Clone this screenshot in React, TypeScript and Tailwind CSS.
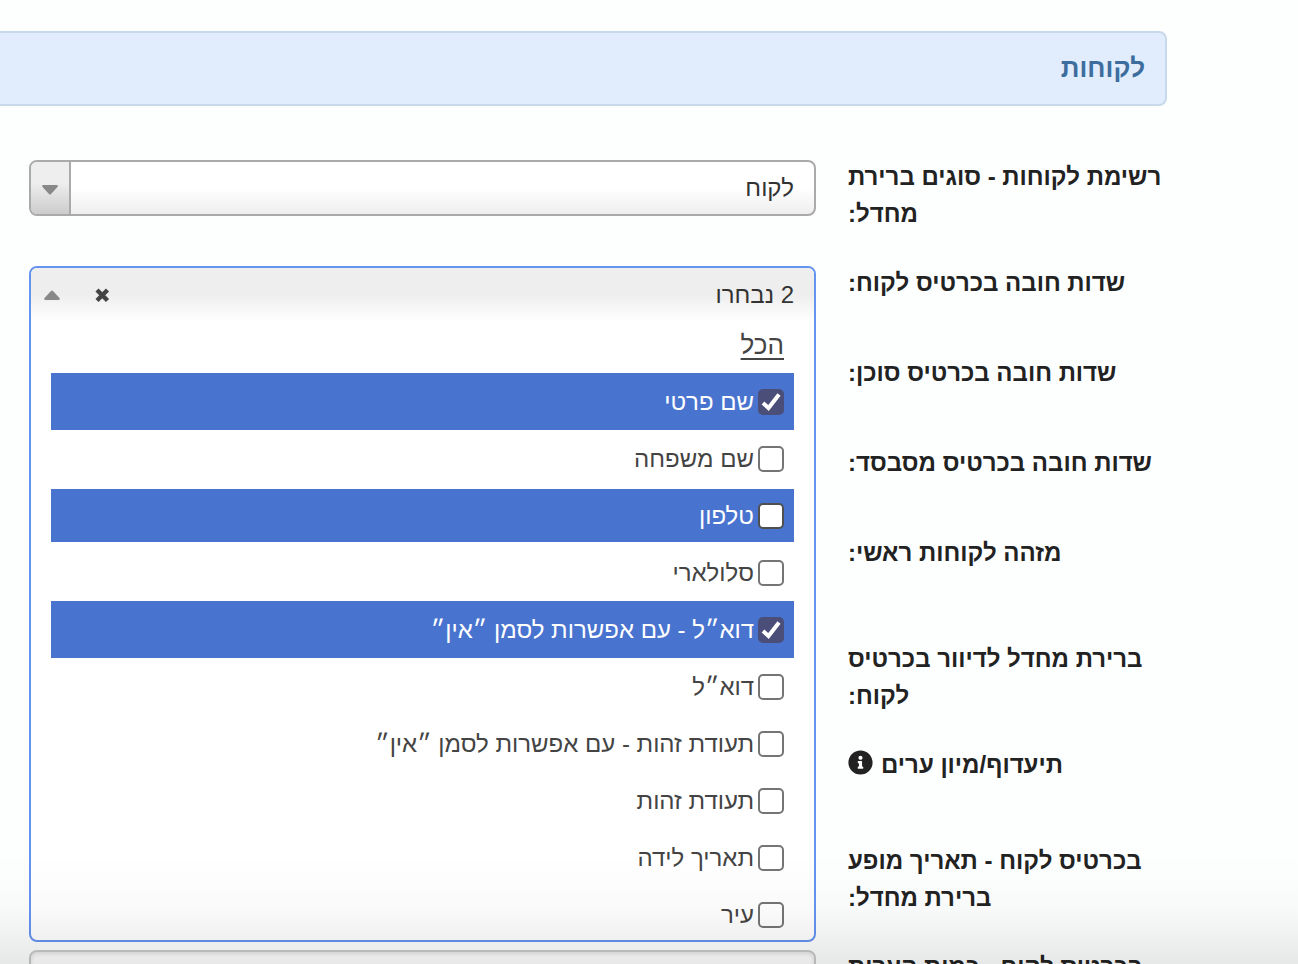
import { useState } from "react";
import { FaInfoCircle } from "react-icons/fa";

type Field = { id: string; label: string; size: string; info?: boolean };

const FIELDS: Field[] = [
  { id: "list-type", label: "רשימת לקוחות - סוגים ברירת מחדל:", size: "min-h-[74px]" },
  { id: "client-required", label: "שדות חובה בכרטיס לקוח:", size: "min-h-[58px]" },
  { id: "agent-required", label: "שדות חובה בכרטיס סוכן:", size: "min-h-[58px]" },
  { id: "sponsor-required", label: "שדות חובה בכרטיס מסבסד:", size: "min-h-[58px]" },
  { id: "main-id", label: "מזהה לקוחות ראשי:", size: "min-h-[74px]" },
  { id: "mailing", label: "ברירת מחדל לדיוור בכרטיס לקוח:", size: "min-h-[74px]" },
  { id: "cities", label: "תיעדוף/מיון ערים", size: "min-h-16", info: true },
  { id: "show-date", label: "בכרטיס לקוח - תאריך מופע ברירת מחדל:", size: "min-h-[74px]" },
  { id: "history", label: "בכרטיס לקוח - כמות הערות", size: "min-h-[74px]" },
];

type Option = { name: string; checked: boolean; active?: boolean };

const OPTIONS: Option[] = [
  { name: "שם פרטי", checked: true, active: true },
  { name: "שם משפחה", checked: false },
  { name: "טלפון", checked: false, active: true },
  { name: "סלולארי", checked: false },
  { name: "דוא״ל - עם אפשרות לסמן ״אין״", checked: true, active: true },
  { name: "דוא״ל", checked: false },
  { name: "תעודת זהות - עם אפשרות לסמן ״אין״", checked: false },
  { name: "תעודת זהות", checked: false },
  { name: "תאריך לידה", checked: false },
  { name: "עיר", checked: false },
];

export default function App() {
  return (
    <div dir="rtl" className="relative h-screen overflow-hidden bg-[#fdfefe] pt-[31px] text-2xl text-[#222] font-['Liberation_Sans','Open_Sans',sans-serif]">
      <header className="mr-[131px] flex h-[75px] items-center rounded-r-lg border-2 border-l-0 border-[#c8d9ec] bg-[#e1edfc] pr-5">
        <h1 className="text-[26px] font-bold text-[#3d6d9e]">לקוחות</h1>
      </header>

      <form className="mt-[52px] mr-[131px] ml-[29px] flex flex-col gap-8">
        {FIELDS.map((f) => (
          <div key={f.id} className={`flex items-start gap-8 ${f.size}`}>
            <label htmlFor={f.id} className="w-[319px] shrink-0 text-left text-2xl leading-[37px] font-bold">
              {f.label}
              {f.info && <FaInfoCircle className="mr-2 inline-block size-[25px] align-[-2px]" />}
            </label>
            <div className="relative min-w-0 flex-1 pt-[2px]">
              {f.id === "list-type" && <SingleSelect id={f.id} />}
              {f.id === "client-required" && <MultiSelect id={f.id} />}
              {f.id === "history" && <div className="h-14 rounded-lg border-2 border-[#c8c8c8] bg-white shadow-[inset_0_2px_4px_rgba(0,0,0,0.12)]" />}
            </div>
          </div>
        ))}
      </form>

      {/* fade at the lower edge of the window */}
      <div className="pointer-events-none absolute inset-x-0 bottom-0 z-20 h-[110px] bg-linear-to-b from-transparent via-black/2 to-black/9" />
    </div>
  );
}

function SingleSelect({ id }: { id: string }) {
  return (
    <div className="relative">
      <select
        id={id}
        defaultValue="client"
        className="block h-14 w-full appearance-none rounded-lg border-2 border-[#aaa] bg-linear-to-b from-white from-50% to-[#eee] pr-5 pl-14 text-2xl text-[#333]"
      >
        <option value="client">לקוח</option>
      </select>
      <span className="pointer-events-none absolute inset-y-[2px] left-[2px] flex w-10 items-center justify-center rounded-l-md border-r-2 border-[#aaa] bg-linear-to-b from-[#eee] from-40% to-[#ccc] pt-1">
        <Caret />
      </span>
    </div>
  );
}

function MultiSelect({ id }: { id: string }) {
  const [options, setOptions] = useState(OPTIONS);

  function toggle(name: string) {
    setOptions(options.map((o) => (o.name === name ? { ...o, checked: !o.checked } : o)));
  }

  function clear() {
    setOptions(options.map((o) => ({ ...o, checked: false, active: false })));
  }

  return (
    <div className="absolute inset-x-0 top-[2px] z-10 overflow-hidden rounded-lg border-2 border-[#6593f0] bg-white">
      <div className="flex h-[53px] items-center bg-linear-to-b from-[#eee] from-50% to-white pr-5 pl-3">
        <button id={id} type="button" className="flex-1 text-right text-2xl text-[#333]">
          {options.filter((o) => o.checked).length} נבחרו
        </button>
        <button type="button" aria-label="נקה" onClick={clear} className="ml-7 p-1">
          <svg viewBox="0 0 18 18" className="size-[18px]" fill="none" stroke="#444" strokeWidth="4.400">
            <path d="M4 4l10.500 10.500M14.500 4L4 14.500" />
          </svg>
        </button>
        <Caret up />
      </div>
      <div className="h-[619px] overflow-hidden px-5">
        <div className="flex h-[52px] items-center px-[10px] pb-1">
          <button type="button" className="text-[26px] text-[#444] underline decoration-2 underline-offset-4">הכל</button>
        </div>
        <ul>
          {options.map((o) => (
            <li key={o.name} className="flex h-[57px] items-center">
              <label
                className={
                  o.active
                    ? `flex w-full items-center gap-1 bg-[#4873cf] px-[10px] text-white ${o.checked ? "h-[57px]" : "h-[53px]"}`
                    : "flex w-full items-center gap-1 px-[10px] text-[#444]"
                }
              >
                <span className="relative size-[26px] shrink-0">
                  <input
                    type="checkbox"
                    checked={o.checked}
                    onChange={() => toggle(o.name)}
                    className={`peer block size-[26px] appearance-none rounded-[5px] border-2 bg-white checked:border-[#4a4e79] checked:bg-[#4a4e79] ${o.active ? "border-[#4f4f4f]" : "border-[#757575]"}`}
                  />
                  <svg viewBox="0 0 26 26" className="pointer-events-none absolute inset-0 hidden peer-checked:block">
                    <path d="M5 14l5.500 5L21 5.500" fill="none" stroke="#fff" strokeWidth="4" />
                  </svg>
                </span>
                {o.name}
              </label>
            </li>
          ))}
        </ul>
      </div>
    </div>
  );
}

function Caret({ up }: { up?: boolean }) {
  return (
    <svg viewBox="0 0 18 12" className={`h-3 w-[18px] fill-[#888] ${up ? "rotate-180" : ""}`}>
      <path d="M2 1H16Q17.500 1.500 16.500 3L10 10Q9 11 8 10L1.500 3Q.5 1.500 2 1Z" />
    </svg>
  );
}
